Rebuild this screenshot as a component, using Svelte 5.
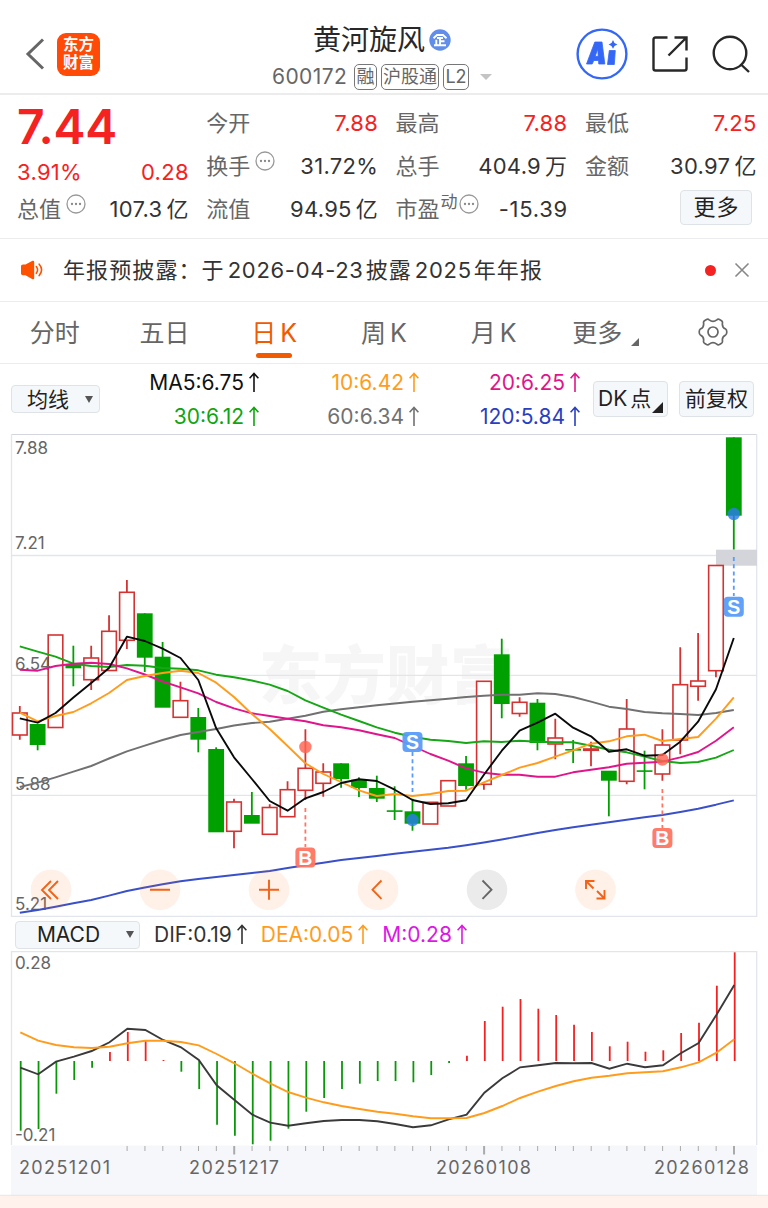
<script>
  const X0 = 19.8;
  const STEP = 17.85;
  const cx = (i) => X0 + STEP * i;

  // colour, body top, body bottom, high, low
  const candles = [
    ['r', 713, 735, 706, 739.7], ['g', 724, 745, 724, 750.3], ['r', 635, 727.5, 635, 727.5],
    ['g', 664.3, 668.3, 645.7, 686.3], ['r', 658, 679.7, 645.7, 690], ['r', 631.3, 670.5, 615.3, 670],
    ['r', 592.3, 640.3, 580, 649], ['g', 613.3, 657.7, 613.3, 672], ['g', 656.7, 707.7, 642, 707],
    ['r', 700.7, 717.3, 681.7, 717], ['g', 717, 739.7, 708, 752.3], ['g', 749, 832.3, 747.3, 832],
    ['r', 802, 831.3, 798.7, 848.3], ['g', 815, 823.7, 792, 823], ['r', 807.5, 834.3, 804.3, 834],
    ['r', 789.7, 816.7, 781.3, 816], ['r', 768.3, 790.3, 729.3, 800], ['r', 772, 783.3, 763.3, 796.7],
    ['g', 763.3, 779, 763.3, 787.7], ['g', 779.7, 788, 777.3, 797], ['g', 788, 798.7, 775.7, 802],
    ['g', 810.3, 811.9, 786.3, 820], ['g', 811.3, 823.7, 798.7, 830.7], ['r', 802.3, 824, 802, 824],
    ['r', 780.7, 806, 781, 806], ['g', 763.3, 786, 756, 789.7], ['r', 681.3, 784.3, 681, 789.7],
    ['g', 654.3, 704, 638.7, 718.3], ['r', 702.3, 713.5, 697.3, 716.7], ['g', 702.7, 743, 699, 750.3],
    ['r', 738, 744, 718.7, 759.3], ['g', 749, 750.6, 740, 763], ['r', 749, 750.3, 741.7, 766.3],
    ['g', 770.7, 780.7, 771, 816.3], ['r', 729, 781.3, 699, 784.3], ['g', 770.3, 771.9, 750.7, 789.3],
    ['r', 745, 774, 729.3, 780.7], ['r', 684.7, 740, 647.3, 754.3], ['r', 681, 686.3, 633, 700.7],
    ['r', 565.5, 670.7, 565.5, 677.3], ['g', 437.3, 515.7, 437.3, 549.5]
  ];

  const ma5 = [718.3, 722.7, 713, 697.5, 683, 668, 636.7, 641, 648.7, 658, 680, 728.3, 757.3, 779, 801, 810.7, 798.3, 792, 783, 779.3, 781, 789.7, 800, 804, 803.3, 800.3, 774.7, 750.7, 730.7, 722.7, 713.7, 727.7, 736.3, 751.7, 749.3, 755.7, 755, 741.7, 721.7, 689.3, 638];
  const ma10 = [712.7, 721.3, 716, 712, 703.3, 693, 680, 676, 673, 670.7, 673, 682.7, 697, 714, 729, 746, 763.3, 774, 782, 790.3, 796, 794, 796, 794, 791, 790.7, 782.3, 775, 767.7, 763, 756.7, 750.3, 743.7, 741.3, 736.3, 734.7, 741, 739, 737, 718.7, 697.3];
  const ma20 = [669.7, 670.7, 666, 663.7, 662.7, 664, 668.3, 674.5, 681.5, 687.3, 693.3, 702, 708.3, 713.3, 716, 718.7, 721.3, 725.3, 727.3, 730.3, 734.3, 738, 746, 754, 760.7, 768.3, 772.7, 774.7, 774.7, 776.7, 776.7, 772.3, 769.7, 767.3, 763.7, 762.7, 761.7, 757.3, 752, 740.7, 727.3];
  const ma30 = [646.3, 651.7, 656.7, 663.7, 666, 667, 665, 665.7, 668, 668.7, 670.3, 674.7, 677.3, 680.5, 684.7, 691, 700.3, 707.7, 714.7, 721, 727.3, 732.7, 736.7, 739.7, 741, 743, 741.3, 742, 740.7, 741.7, 742.3, 742.3, 745.7, 749.7, 752.3, 756.7, 761, 763, 762, 757.7, 750];
  const ma60 = [787, 782.7, 777.3, 771.7, 766, 758.5, 751.3, 745.7, 740, 735, 732, 729, 725.5, 723, 721.7, 718.7, 715.7, 711.7, 709.3, 707.3, 705.3, 703.5, 701.7, 700.2, 698.7, 697, 695.7, 694.7, 694.7, 693.3, 694, 697, 701.7, 706.7, 709, 712, 713.3, 714, 715, 713, 710];
  const ma120 = [912.7, 910, 906.7, 903.3, 900, 895.7, 891, 887.5, 884.3, 881.3, 879, 877, 875, 873, 871, 868, 865.3, 862.7, 860, 858, 856, 853.8, 851.7, 849.7, 847.7, 845.2, 842.5, 839.5, 836.3, 833, 830, 827.2, 824.7, 822.3, 819.8, 817.3, 815, 812, 808.7, 804.7, 800.3];

  const lines = [
    [ma120, '#3950c8'], [ma60, '#717171'], [ma30, '#16a616'],
    [ma20, '#e0158c'], [ma10, '#ff9c1c'], [ma5, '#0a0a0a']
  ];

  const bars = [1130.7, 1129, 1093.7, 1080, 1067.7, 1052, 1032, 1041, 1060, 1071.7, 1089, 1124.7, 1135.7, 1144.3, 1140.7, 1128.7, 1111.7, 1098, 1089, 1083.7, 1081, 1081, 1082.3, 1075, 1063, 1055.7, 1021, 1006.7, 999, 1008.7, 1015, 1024.7, 1032, 1046.3, 1041.7, 1051.7, 1050.3, 1033, 1022.7, 985.7, 952.3];
  const dif = [1067.7, 1074.3, 1061.7, 1056.7, 1051, 1042.3, 1028.7, 1030, 1040, 1047.3, 1060, 1085.3, 1100, 1114.7, 1122.7, 1125.7, 1123.3, 1121, 1120, 1120, 1121.3, 1124, 1127.3, 1125.3, 1119.3, 1114.7, 1092.7, 1078.3, 1067.3, 1065.3, 1063, 1063.3, 1063, 1068.7, 1063.7, 1067.3, 1065.3, 1053.3, 1043, 1014.7, 985];
  const dea = [1032.3, 1040.7, 1045, 1047.3, 1048, 1046.7, 1043.3, 1040.7, 1040.7, 1042, 1045.3, 1054, 1063.3, 1073.7, 1083.3, 1092, 1097.7, 1102.3, 1106, 1109, 1111.7, 1113.7, 1116.3, 1118.3, 1118.3, 1118, 1113, 1106, 1098, 1091.7, 1086, 1081.3, 1077.7, 1075.7, 1073.3, 1072.3, 1071.3, 1067.3, 1062.3, 1052.7, 1039.3];

  const pts = (a, dx = 0) => a.map((y, i) => `${(cx(i) + dx).toFixed(1)},${y}`).join(' ');
  const ticks = Array.from({ length: 35 }, (_, k) => k + 6);
  const prices = [['7.88', 454], ['7.21', 549], ['6.54', 669.6], ['5.88', 790], ['5.21', 910]];
  const dates = [['20251201', 19, 91], ['20251217', 189, 90], ['20260108', 436, 95], ['20260128', 654, 95]];
  const marks = [
    { t: 'B', x: 305.4, y: 857.5, a: 808, b: 847, dot: 747, c: '#ff7563' },
    { t: 'S', x: 412.5, y: 742, a: 752, b: 792, dot: 820, c: '#5a9cf8' },
    { t: 'B', x: 662.4, y: 838, a: 789, b: 828, dot: 759.5, c: '#ff7563' },
    { t: 'S', x: 733.8, y: 606.7, a: 557, b: 596, dot: 514, c: '#5a9cf8' }
  ];
</script>

{#snippet dots()}
  <svg class="dots" width="20" height="20" viewBox="0 0 20 20">
    <circle cx="10" cy="10" r="9" fill="none" stroke="#999" stroke-width="1.3" />
    <circle cx="6" cy="10" r="1.15" fill="#888" /><circle cx="10" cy="10" r="1.15" fill="#888" /><circle cx="14" cy="10" r="1.15" fill="#888" />
  </svg>
{/snippet}

{#snippet up()}
  <svg class="up" width="12" height="21" viewBox="0 0 12 21" fill="none" stroke="currentColor" stroke-width="1.6">
    <path d="M6 20V1.5M1.6 6.2 6 1.5l4.4 4.7" />
  </svg>
{/snippet}

<div class="app">
  <header>
    <div class="left">
      <svg width="20" height="32" viewBox="0 0 20 32" fill="none" stroke="#666" stroke-width="3"><path d="M18 1.5 3 16l15 14.5" /></svg>
      <div class="logo"><span>东方<br />财富</span></div>
    </div>
    <div class="title">
      <div class="name"><span>黄河旋风</span>
        <svg width="22" height="22" viewBox="0 0 22 22"><circle cx="11" cy="11" r="10.7" fill="#618eea" />
          <g fill="none" stroke="#fff" stroke-width="1.9"><path d="M4.500 9.200 8 6h6l3.500 3.200M5 16.300h12M11 8.800v7.500M11 12.300h4.500M7.300 10.800v5.500M8 9h6" /></g></svg>
      </div>
      <div class="code"><span class="num">600172</span><i>融</i><i class="wide">沪股通</i><i class="l2">L2</i><b></b></div>
    </div>
    <div class="tools">
      <svg width="52" height="52" viewBox="0 0 52 52">
        <circle cx="26" cy="26" r="24.400" fill="none" stroke="#3567f6" stroke-width="2.400" />
        <path fill="#3567f6" stroke="#3567f6" stroke-width=".8" stroke-linejoin="round" fill-rule="evenodd" d="M18.800 14h7.200l2.800 22h-6l-.3-3.500h-4.700l-1.600 3.500h-5.700zM21.800 21l-2.600 7.300h3zM33.300 22.500h6l-1 14h-6.800z" />
        <path fill="#3567f6" d="M37 12l1.500 2.900 2.900 1.500-2.900 1.500L37 20.800l-1.500-2.900-2.900-1.500 2.900-1.500z" />
      </svg>
      <svg width="38" height="38" viewBox="0 0 38 38" fill="none" stroke="#282828" stroke-width="2.400">
        <path d="M16.500 2.500H4.500Q2.500 2.500 2.500 4.500V33.500Q2.500 35.500 4.500 35.500H33.500Q35.500 35.500 35.500 33.500V22.500M23.500 2.500H35.500V15.500M35 3 17.500 20.500" />
      </svg>
      <svg width="38" height="38" viewBox="0 0 38 38" fill="none" stroke="#282828" stroke-width="2.400">
        <circle cx="18" cy="18" r="16.300" /><path d="M28.500 29 37 37" />
      </svg>
    </div>
  </header>

  <section class="quote">
    <div class="price">7.44</div>
    <div class="cell"><label>今开</label><em class="red">7.88</em></div>
    <div class="cell"><label>最高</label><em class="red">7.88</em></div>
    <div class="cell"><label>最低</label><em class="red">7.25</em></div>
    <div class="cell chg"><em class="red">3.91%</em><em class="red">0.28</em></div>
    <div class="cell"><label>换手{@render dots()}</label><em>31.72%</em></div>
    <div class="cell"><label>总手</label><em>404.9<u>万</u></em></div>
    <div class="cell"><label>金额</label><em>30.97<u>亿</u></em></div>
    <div class="cell"><label>总值{@render dots()}</label><em>107.3<u>亿</u></em></div>
    <div class="cell"><label>流值</label><em>94.95<u>亿</u></em></div>
    <div class="cell"><label class="pe">市盈<sup>动</sup>{@render dots()}</label><em class="wider">-15.39</em></div>
    <div class="cell end"><button>更多</button></div>
  </section>

  <section class="notice">
    <svg width="24" height="20" viewBox="0 0 24 20"><path fill="#ff5200" d="M1 6Q1 4.500 3 4.500H5.500L12.500.8Q14.200.3 14.200 2V18Q14.200 19.700 12.500 19.200L5.500 15.200H3Q1 15.200 1 13.500z" />
      <path d="M16.300 6.500q2.600 3.300 0 6.800M19.200 4.200q4.800 5.500 0 11.400" fill="none" stroke="#ff5200" stroke-width="1.600" stroke-linecap="round" /></svg>
    <p>年报预披露：于<span>2026-04-23</span>披露<span>2025</span>年年报</p>
    <b></b>
    <svg width="16" height="16" viewBox="0 0 16 16" stroke="#888" stroke-width="1.600"><path d="M1.500 1.500l13 13M14.500 1.500l-13 13" /></svg>
  </section>

  <nav>
    <a>分时</a><a>五日</a><a class="on">日<span>K</span></a><a>周<span>K</span></a><a>月<span>K</span></a>
    <a class="more">更多<svg width="8" height="8"><path d="M8 0V8H0z" fill="#666" /></svg></a>
    <a><svg class="gear" width="30" height="28" viewBox="0 0 30 28" fill="none" stroke="#666" stroke-width="1.700" stroke-linejoin="round">
      <path d="M8.500 1.500q1.500-.8 2.700.3Q15 4.800 18.800 1.800q1.200-1.100 2.700-.3l2 1.200q1.300.9.900 2.500-.5 4.200 3.200 5.900 1.200.7 1.200 2.900t-1.200 2.900q-3.700 1.700-3.200 5.900.4 1.600-.9 2.500l-2 1.200q-1.500.8-2.700-.3-3.800-3-7.600 0-1.200 1.100-2.700.3l-2-1.200q-1.300-.9-.9-2.500.5-4.200-3.200-5.900-1.200-.7-1.200-2.900t1.200-2.900Q6.100 9.400 5.600 5.200q-.4-1.600.9-2.500z" /><circle cx="15" cy="14" r="5" /></svg></a>
  </nav>

  <section class="ind">
    <button class="sel"><span>均线</span><b></b></button>
    <div class="mas">
      <span style:color="#111">MA5:6.75{@render up()}</span><span style:color="#ff9c1c">10:6.42{@render up()}</span><span style:color="#e0158c">20:6.25{@render up()}</span>
      <span style:color="#0fa50f">30:6.12{@render up()}</span><span style:color="#717171">60:6.34{@render up()}</span><span style:color="#2a3fc0">120:5.84{@render up()}</span>
    </div>
    <button class="dk">DK<u>点</u><svg width="11" height="11"><path d="M11 0V11H0z" fill="#222" /></svg></button>
    <button class="fq">前复权</button>
  </section>

  <svg class="chart" width="768" height="484" viewBox="0 434 768 484">
    <text x="259" y="698" class="wm" textLength="254">东方财富</text>
    <g fill="none" stroke="#e2e5ec" stroke-width="1.300">
      <path d="M11.500 434.300H757" stroke="#d3d6de" stroke-width="1.600" />
      <path d="M11.500 434V916.300H756.700V434M11.500 555.500H757M11.500 675.300H757M11.500 795.300H757" />
    </g>
    <rect x="716" y="549.700" width="41" height="16" fill="#d3d5da" />
    {#each candles as [c, t, b, h, l], i}
      {#if c === 'g'}
        <path d="M{cx(i)} {h}V{l}" stroke="#00a000" stroke-width="1.800" />
        <rect x={cx(i) - 7.9} y={t} width="15.800" height={b - t} fill="#00a000" />
      {:else}
        <path d="M{cx(i)} {h}V{t}M{cx(i)} {b}V{l}" stroke="#d43333" stroke-width="1.800" />
        <rect x={cx(i) - 7.3} y={t} width="14.600" height={b - t} fill="#fff" stroke="#d43333" stroke-width="1.600" />
      {/if}
    {/each}
    {#each prices as [p, y]}
      <text x="15" {y} class="axis">{p}</text>
    {/each}
    {#each lines as [a, c]}
      <polyline points={pts(a)} fill="none" stroke={c} stroke-width="1.900" stroke-linejoin="round" />
    {/each}
    {#each marks as m}
      <path d="M{m.x} {m.a}V{m.b}" stroke={m.c} stroke-width="1.800" stroke-dasharray="4 3.200" />
      <circle cx={m.x} cy={m.dot} r="6.200" fill={m.t === 'B' ? '#ff6450' : '#2a7ce8'} opacity=".82" />
      <rect x={m.x - 10} y={m.y - 10} width="20" height="20" rx="4" fill={m.c} opacity=".95" />
      <text x={m.x} y={m.y + 7} class="mk">{m.t}</text>
    {/each}
    <g fill="none" stroke="#f26217" stroke-width="1.900">
      {#each [51, 160, 269, 378, 487, 595.500] as x}
        <circle cx={x} cy="889.800" r="20.300" fill={x === 487 ? '#000' : '#ff6a1a'} fill-opacity={x === 487 ? 0.08 : 0.1} stroke="none" />
      {/each}
      <path d="M51 881l-9 9 9 9M58 881l-9 9 9 9M150 889.700h20M259 889.700h20M269 879.700v20M381.500 880.500l-9 9.200 9 9.200" />
      <path d="M482.500 880.500l9 9.200-9 9.200" stroke="#666" />
      <path d="M586 889V881h8.500M586.500 881.500l7 7M596.500 898.500h8v-8.500M604 898l-7-7" />
    </g>
  </svg>

  <section class="mh">
    <button class="sel"><span>MACD</span><b></b></button>
    <span class="v1">DIF:0.19{@render up()}</span><span class="v2">DEA:0.05{@render up()}</span><span class="v3">M:0.28{@render up()}</span>
  </section>

  <svg class="chart" width="768" height="257" viewBox="0 951 768 257">
    <rect x="11" y="1145.500" width="746" height="50" fill="#f6f7fa" />
    <rect x="0" y="1195.500" width="768" height="13" fill="#fff2ec" />
    <path d="M0 1195.300H768" stroke="#e4e6ea" />
    <path d="M11.500 1145V951.700H756.700V1145" fill="none" stroke="#e2e5ec" stroke-width="1.300" />
    {#each bars as y, i}
      <path d="M{cx(i) + 0.9} 1061V{y}" stroke={y < 1061 ? '#f52020' : '#0a980a'} stroke-width="1.800" />
    {/each}
    {#each ticks as i}
      <path d="M{cx(i) + 0.2} 1146v{i === 12 || i === 26 || i === 40 ? 8.5 : 5}" stroke="#aaa" stroke-width={i === 12 || i === 26 || i === 40 ? 2 : 1} />
    {/each}
    <text x="15" y="969" class="axis">0.28</text>
    <text x="15" y="1141" class="axis">-0.21</text>
    <polyline points={pts(dif, 0.5)} fill="none" stroke="#3a3a3a" stroke-width="1.900" />
    <polyline points={pts(dea, 0.5)} fill="none" stroke="#ff9c1c" stroke-width="1.900" />
    {#each dates as [d, x, w]}
      <text {x} y="1173.500" class="date" textLength={w}>{d}</text>
    {/each}
  </svg>
</div>

<style>
  :global(body) { background: #fff; }
  .app { width: 768px; height: 1208px; overflow: hidden; background: #fff; color: #333; font-family: Inter, "Noto Sans CJK SC", sans-serif; line-height: 1.2; }
  .app * { box-sizing: border-box; }
  svg { display: block; flex: none; }
  button { font: inherit; color: #222; background: #f5f8fa; border: 1.500px solid #dfe3e7; border-radius: 4px; padding: 0; display: flex; align-items: center; justify-content: center; }
  u { text-decoration: none; margin-left: 4px; }
  header { height: 95px; border-bottom: 2px solid #ececec; display: grid; grid-template-columns: 250px 265px 1fr; }
  .left { display: flex; align-items: center; gap: 12px; padding: 15px 0 0 25px; }
  .logo { width: 43px; height: 43px; border-radius: 9px; background: #ff4a08; color: #fff; display: flex; align-items: center; justify-content: center; font: 700 15.500px/18px Inter, "Noto Sans CJK SC", sans-serif; }
  .title { display: flex; flex-direction: column; }
  .name { display: flex; align-items: center; gap: 4px; margin: 21px 0 0 63px; height: 38px; font-size: 28px; color: #282828; white-space: nowrap; }
  .name span { margin-top: 1px; }
  .name svg { margin-top: -1px; }
  .code { display: flex; align-items: center; height: 28px; margin-top: 4px; padding-left: 22px; color: #666; font-size: 21px; white-space: nowrap; }
  .num { width: 82px; letter-spacing: .4px; }
  .code i { font-style: normal; font-size: 18px; line-height: 24px; height: 26px; border: 1.500px solid #777; border-radius: 5px; width: 23px; text-align: center; margin-right: 4px; display: flex; justify-content: center; }
  .code .wide { width: 58px; }
  .code .l2 { width: 26px; }
  .code b { border: 6px solid transparent; border-top-color: #c4c4c4; border-bottom: 0; margin-left: 7px; }
  .tools { display: flex; align-items: center; gap: 23px; padding: 15px 0 0 61px; }
  .quote { height: 144px; border-bottom: 1px solid #ececec; padding: 7px 12px 0 17px; display: grid; grid-template-columns: repeat(4, 171.500px); column-gap: 17.800px; grid-template-rows: repeat(3, 43px); font-size: 22px; }
  .price { font-size: 48px; font-weight: 600; color: #f52222; line-height: 49px; letter-spacing: -.2px; }
  .cell { display: flex; align-items: center; justify-content: space-between; white-space: nowrap; margin-top: -1px; }
  .chg { padding-top: 13px; }
  label { color: #666; display: flex; align-items: center; }
  label .dots { margin: -9px 0 0 5px; }
  sup { font-size: 17px; line-height: 18px; margin-top: -14px; margin-left: 1px; }
  .pe :global(.dots) { margin-left: 1px; }
  em { font-style: normal; letter-spacing: .3px; margin-right: -.3px; }
  .wider { letter-spacing: .7px; margin-right: -.7px; }
  .red { color: #f52222; }
  .end { justify-content: flex-end; padding-right: 4px; }
  .end button { width: 72px; height: 35px; letter-spacing: 1px; margin-top: -3px; }
  .notice { height: 63px; border-bottom: 1px solid #ececec; display: flex; align-items: center; padding: 0 18px 0 20px; }
  .notice p { margin: 0 0 0 19px; flex: 1; font-size: 22px; letter-spacing: 1.100px; white-space: nowrap; }
  .notice p span { margin: 0 2px 0 3px; letter-spacing: .7px; }
  .notice b { width: 11px; height: 11px; border-radius: 50%; background: #f52222; margin-right: 18px; }
  nav { height: 62px; border-bottom: 1px solid #ececec; display: grid; grid-template-columns: repeat(7, 109.700px); align-items: stretch; }
  nav a { display: flex; align-items: center; justify-content: center; font-size: 25px; color: #666; position: relative; padding-top: 1px; }
  nav a span { margin-left: 4px; }
  nav .on { color: #f05a00; }
  .on::after { content: ""; position: absolute; bottom: 5px; width: 36px; height: 5px; border-radius: 3px; background: #f05a00; }
  .more { padding-left: 5px; }
  .more svg { margin: 18px 0 0 9px; }
  .gear { margin-top: -2px; }
  .ind { height: 70px; display: flex; align-items: center; padding-left: 11px; font-size: 21px; }
  .sel { width: 89px; height: 28px; gap: 16px; padding-left: 9px; }
  .sel span { margin-top: 1px; }
  .sel b { border: 4.500px solid transparent; border-top: 7px solid #555; border-bottom: 0; }
  .mas { width: 481px; height: 68px; display: grid; grid-template-columns: 160px 160px 161px; grid-template-rows: 34px 34px; padding-top: 1px; }
  .mas span { display: flex; align-items: center; justify-content: flex-end; gap: 4px; white-space: nowrap; }
  .mas .up, .mh .up { margin-top: -1px; }
  .dk { width: 75px; height: 36px; margin-left: 12px; justify-content: flex-start; padding-left: 4px; }
  .dk u { margin-left: 3px; }
  .dk svg { margin: 17px 0 0 1px; }
  .fq { width: 75px; height: 36px; margin-left: 11px; }
  .mh { height: 33px; display: flex; align-items: center; padding-left: 15px; font-size: 21px; }
  .mh .sel { width: 125px; gap: 26px; padding-left: 16px; }
  .mh > span { display: flex; align-items: center; gap: 4px; white-space: nowrap; }
  .v1 { color: #333; margin-left: 14px; }
  .v2 { color: #ff9c1c; margin-left: 13px; }
  .v3 { color: #dc18e4; margin-left: 13px; }
  .chart { font-family: Inter, "Noto Sans CJK SC", sans-serif; }
  .axis { font-size: 17px; fill: #666; }
  .date { font-size: 18px; fill: #666; }
  .mk { font-size: 19.500px; font-weight: 700; fill: #fff; text-anchor: middle; font-family: "Liberation Sans", sans-serif; }
  .wm { font-size: 63px; font-weight: 900; fill: #f6f6f6; }
</style>
